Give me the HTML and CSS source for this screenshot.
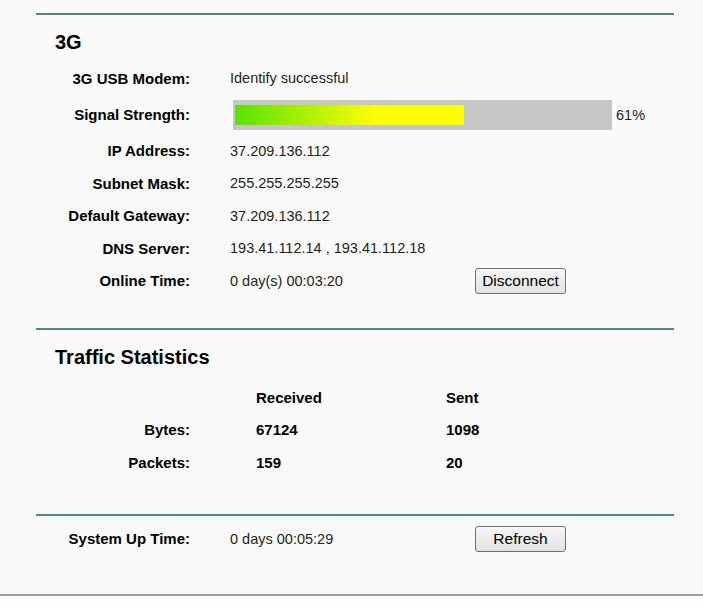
FILE: index.html
```html
<!DOCTYPE html>
<html lang="en">
<head>
    <meta charset="UTF-8">
    <title>Status</title>
    <link rel="stylesheet" href="styles.css">
</head>
<body>
    <div class="page">
        <div class="panel">

            <!-- 3G connection -->
            <div class="section wan">
                <h2>3G</h2>
                <div class="info-grid wan-grid">
                    <div class="label">3G USB Modem:</div>
                    <div class="value wide">Identify successful</div>

                    <div class="label">Signal Strength:</div>
                    <div class="value wide">
                        <div class="signal-bar">
                            <div class="signal-fill" style="width: 61%;"></div>
                        </div>
                        <span class="signal-pct">61%</span>
                    </div>

                    <div class="label">IP Address:</div>
                    <div class="value wide">37.209.136.112</div>

                    <div class="label">Subnet Mask:</div>
                    <div class="value wide">255.255.255.255</div>

                    <div class="label">Default Gateway:</div>
                    <div class="value wide">37.209.136.112</div>

                    <div class="label">DNS Server:</div>
                    <div class="value wide">193.41.112.14 , 193.41.112.18</div>

                    <div class="label">Online Time:</div>
                    <div class="value">0 day(s) 00:03:20</div>
                    <div class="action"><button class="btn">Disconnect</button></div>
                </div>
            </div>

            <!-- Traffic counters -->
            <div class="section traffic">
                <h2>Traffic Statistics</h2>
                <div class="traffic-grid">
                    <div class="label"></div>
                    <div class="stat">Received</div>
                    <div class="stat">Sent</div>

                    <div class="label">Bytes:</div>
                    <div class="stat">67124</div>
                    <div class="stat">1098</div>

                    <div class="label">Packets:</div>
                    <div class="stat">159</div>
                    <div class="stat">20</div>
                </div>
            </div>

            <!-- Uptime -->
            <div class="section uptime">
                <div class="info-grid">
                    <div class="label">System Up Time:</div>
                    <div class="value">0 days 00:05:29</div>
                    <div class="action"><button class="btn">Refresh</button></div>
                </div>
            </div>

        </div>
    </div>
</body>
</html>
```

FILE: styles.css
```css
/* Router status page */
body {
    margin: 0;
    background: #fdfdfd;
    font-family: "Liberation Sans", Arial, sans-serif;
    color: #1e1e1e;
}

.page {
    background: #fafafa;
    height: 594px;
    border-bottom: 2px solid #9d9d9d;
}

.panel {
    padding-top: 13px;
    margin-left: 36px;
    width: 638px;
}

.section {
    border-top: 2px solid #4f8b6c;
}

.section h2 {
    margin: 0 0 0 19px;
    font-size: 20px;
    line-height: 24px;
    font-weight: bold;
    color: #000;
}

.wan {
    padding: 15px 0 31px;
}

.wan h2 {
    margin-bottom: 8px;
}

.traffic {
    padding: 15px 0 35px;
}

.traffic h2 {
    margin-bottom: 12px;
}

.uptime {
    padding: 7px 0 0;
}

.info-grid {
    display: grid;
    grid-template-columns: 154px 285px 1fr;
    grid-auto-rows: 32.5px;
}

/* the signal meter row is a little taller */
.wan-grid {
    grid-template-rows: 32.5px 40px;
}

.label {
    display: flex;
    align-items: center;
    justify-content: flex-end;
    font-size: 15px;
    font-weight: bold;
    color: #000;
}

.value {
    display: flex;
    align-items: center;
    padding-left: 40px;
    font-size: 14.5px;
}

.value.wide {
    grid-column: 2 / 4;
}

.action {
    display: flex;
    align-items: center;
}

.btn {
    width: 91px;
    height: 26px;
    padding: 0;
    font-family: "Liberation Sans", Arial, sans-serif;
    font-size: 15.5px;
    color: #000;
    border: 1px solid #707070;
    border-radius: 3px;
    background: linear-gradient(#f7f7f7, #e2e2e2);
}

/* signal strength meter */
.signal-bar {
    margin-left: 3px;
    width: 375px;
    height: 20px;
    padding: 5px 2px;
    background: #c6c6c6;
}

.signal-fill {
    height: 100%;
    background: linear-gradient(to right, #5ae200 0%, #ffff00 62%, #ffff00 100%);
}

.signal-pct {
    margin-left: 4px;
}

.traffic-grid {
    display: grid;
    grid-template-columns: 154px 256px 1fr;
    grid-auto-rows: 32.5px;
}

.stat {
    display: flex;
    align-items: center;
    padding-left: 66px;
    font-size: 15px;
    font-weight: bold;
    color: #000;
}

.stat + .stat {
    padding-left: 0;
}
```
